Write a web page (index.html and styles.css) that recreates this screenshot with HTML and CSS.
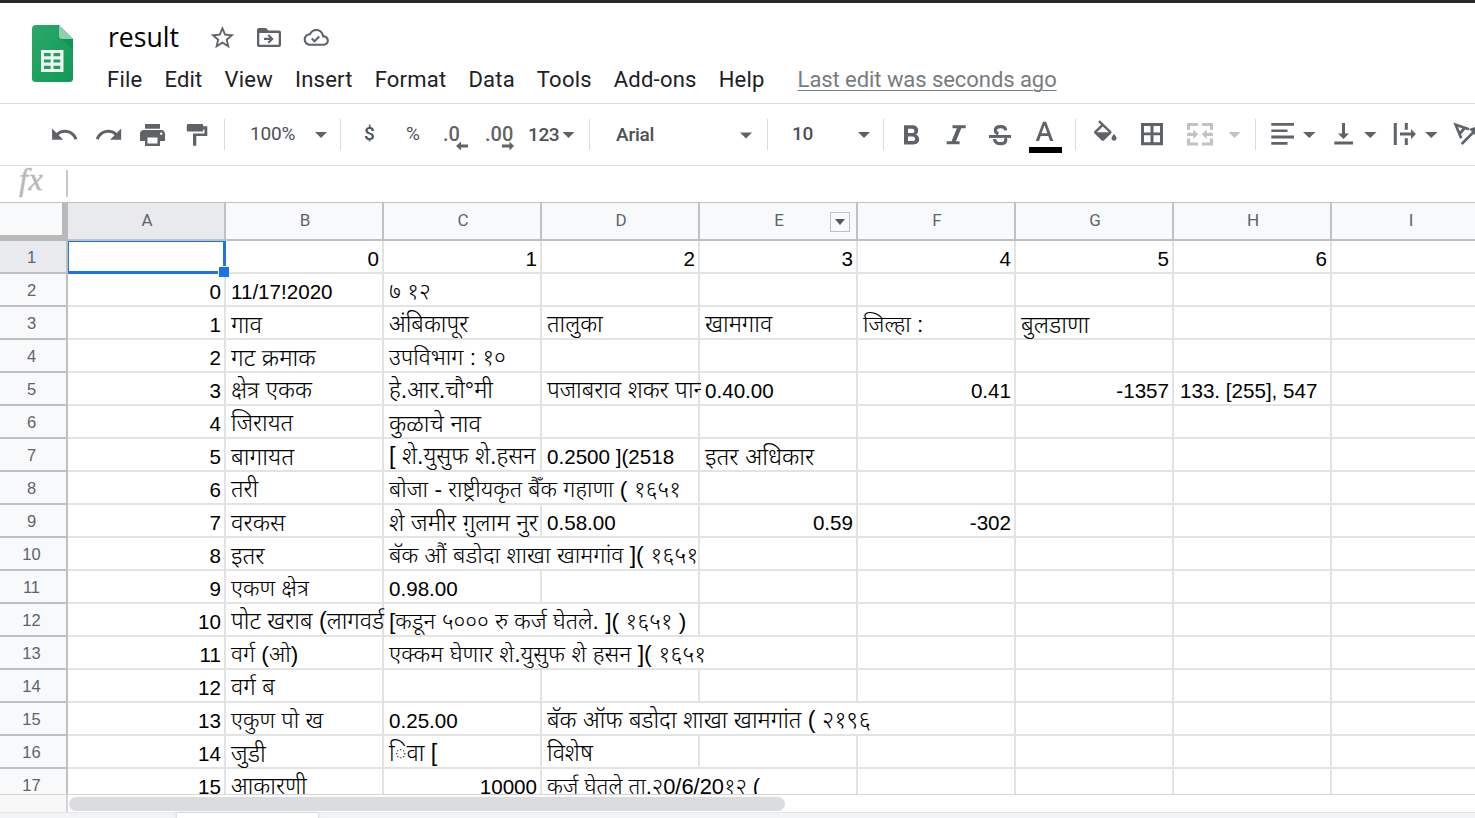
FILE: index.html
```html
<!DOCTYPE html>
<html lang="en">
<head>
<meta charset="utf-8">
<title>result</title>
<link rel="stylesheet" href="styles.css">
</head>
<body>
<div class="app">
  <header class="header">
    <svg class="logo" viewBox="32 25 41 57" width="41" height="57">
      <defs><linearGradient id="lg" x1="0" y1="0" x2="1" y2="1"><stop offset="0" stop-color="#2aa86a"/><stop offset="1" stop-color="#119a55"/></linearGradient></defs>
      <path fill="url(#lg)" d="M36 25h23l14 14v39.500a3.500 3.500 0 0 1-3.500 3.500h-34a3.500 3.500 0 0 1-3.500-3.500V29a4 4 0 0 1 4-4z"/>
      <path fill="#0d8c4c" d="M61 39h12v11z" opacity=".6"/>
      <path fill="#8ed1b1" d="M59 25l14 14H62.500a3.500 3.500 0 0 1-3.500-3.500z"/>
      <path fill="#f1f1f1" fill-rule="evenodd" d="M41 50h22.500v22H41zM44 53v3.200h6.700V53zm9.500 0v3.200h6.700V53zM44 59.400v3.200h6.700v-3.200zm9.500 0v3.200h6.700v-3.200zM44 65.800V69h6.700v-3.200zm9.500 0V69h6.700v-3.200z"/>
    </svg>
    <div class="heading">
      <div class="title-row">
        <span class="title">result</span>
        <svg class="title-icons" viewBox="205 20 130 34" width="130" height="34" fill="#5f6368">
          <path transform="translate(208.400 23.600) scale(1.170)" d="M22 9.240l-7.190-.62L12 2 9.190 8.630 2 9.240l5.460 4.730L5.820 21 12 17.270 18.180 21l-1.630-7.030L22 9.240zM12 15.400l-3.760 2.270 1-4.280-3.320-2.880 4.380-.38L12 6.100l1.710 4.040 4.380.38-3.320 2.880 1 4.280L12 15.400z"/>
          <path fill-rule="evenodd" d="M259 28h7l2.500 2.500H279a2 2 0 0 1 2 2V45a2 2 0 0 1-2 2h-20a2 2 0 0 1-2-2V30a2 2 0 0 1 2-2zm.300 5v11.700h19.400V33zM269 34.200l4.700 4.700-4.700 4.700-1.500-1.500 2.100-2.100H264v-2.200h5.600l-2.100-2.100z"/>
          <path transform="translate(303.700 24.800) scale(1.050)" d="M19.350 10.040C18.670 6.590 15.640 4 12 4 9.110 4 6.610 5.640 5.360 8.040 2.350 8.360 0 10.910 0 14c0 3.310 2.690 6 6 6h13c2.760 0 5-2.240 5-5 0-2.640-2.050-4.780-4.650-4.960zM19 18H6c-2.210 0-4-1.790-4-4 0-2.050 1.530-3.760 3.560-3.970l1.070-.11.5-.95C8.080 7.140 9.940 6 12 6c2.620 0 4.880 1.860 5.390 4.430l.3 1.500 1.530.11c1.560.1 2.780 1.410 2.780 2.960 0 1.650-1.350 3-3 3zM10.300 14.200l-1.900-1.900L7 13.700l3.300 3.300 5.200-5.200-1.400-1.400z"/>
        </svg>
      </div>
      <nav class="menu">
        <span>File</span><span>Edit</span><span>View</span><span>Insert</span><span>Format</span><span>Data</span><span>Tools</span><span>Add-ons</span><span>Help</span>
        <a class="last-edit">Last edit was seconds ago</a>
      </nav>
    </div>
  </header>

  <div class="toolbar">
    <svg viewBox="42 104 182 61" width="182" height="61">
      <path transform="translate(49.600 119.900) scale(1.235)" d="M12.500 8c-2.650 0-5.050.99-6.900 2.600L2 7v9h9l-3.620-3.620c1.390-1.160 3.160-1.880 5.120-1.880 3.540 0 6.550 2.310 7.600 5.500l2.370-.78C21.080 11.030 17.150 8 12.500 8z"/>
      <path transform="translate(94 119.900) scale(1.235)" d="M18.400 10.600C16.550 8.990 14.150 8 11.500 8c-4.650 0-8.580 3.030-9.960 7.220L3.900 16c1.050-3.190 4.050-5.500 7.600-5.500 1.950 0 3.730.72 5.120 1.880L13 16h9V7l-3.600 3.600z"/>
      <path transform="translate(137.500 120.300) scale(1.250 1.220)" d="M19 8H5c-1.660 0-3 1.340-3 3v6h4v4h12v-4h4v-6c0-1.660-1.340-3-3-3zm-3 11H8v-5h8v5zm3-7c-.55 0-1-.45-1-1s.45-1 1-1 1 .45 1 1-.45 1-1 1zm-1-9H6v4h12V3z"/>
      <path d="M188 124h14a1.200 1.200 0 0 1 1.200 1.200v1h4.100V136h-11v9.700H193v-12.300h11.500v-4h-1.300v1a1.200 1.200 0 0 1-1.200 1.200h-14a1.200 1.200 0 0 1-1.200-1.200v-5.200a1.200 1.200 0 0 1 1.200-1.200z"/>
    </svg>
    <i class="sep"></i>
    <span class="tool zoom">100%</span>
    <svg viewBox="308 104 32 61" width="32" height="61"><path d="M315 132h12l-6 6z"/></svg>
    <i class="sep"></i>
    <span class="tool dollar">$</span>
    <span class="tool percent">%</span>
    <span class="tool dec dec-less">.0<svg viewBox="0 0 12 10" width="12" height="10"><path d="M0 5l5-4.500v3h7v3H5v3z"/></svg></span>
    <span class="tool dec dec-more">.00<svg viewBox="0 0 12 10" width="12" height="10"><path d="M12 5L7.500.500v3H0v3h7.500v3z"/></svg></span>
    <span class="tool fmt">123</span>
    <svg viewBox="560 104 29 61" width="29" height="61"><path d="M562.500 132h12l-6 6z"/></svg>
    <i class="sep"></i>
    <span class="tool font">Arial</span>
    <svg viewBox="735 104 32 61" width="32" height="61"><path d="M740 132.500h12l-6 6z"/></svg>
    <i class="sep"></i>
    <span class="tool size">10</span>
    <svg viewBox="848 104 35 61" width="35" height="61"><path d="M858 132h12l-6 6z"/></svg>
    <i class="sep"></i>
    <svg viewBox="884 104 191 61" width="191" height="61">
      <path fill-rule="evenodd" d="M904 125.300h8.600c3.400 0 5.600 2.200 5.600 5.200 0 1.900-.9 3.300-2.300 4.100 2 .8 3.300 2.500 3.300 4.700 0 3.300-2.500 5.200-5.800 5.200H904zm4 3.400v4.400h4.300c2.800 0 2.800-4.400 0-4.400zm0 7.700v4.700h4.800c3 0 3-4.700 0-4.700z"/>
      <path d="M952.500 125.300h13.200v2.900h-4.400l-5.400 13.100h3.700v2.900H946.700v-2.900h4.800l5.400-13.100H952.500z"/>
      <path d="M989 135h22v2.900h-22z"/>
      <path fill="none" stroke="#5f6368" stroke-width="3.200" d="M1005.700 130.300c-.2-2.500-2.400-3.700-5-3.700-3 0-5.300 1.300-5.300 3.800 0 2 1.500 2.800 3 3.300M994.500 139c.2 2.800 2.700 4.600 6 4.600 3.100 0 5.300-1.300 5.300-3.700 0-.8-.3-1.500-.7-2"/>
      <path fill-rule="evenodd" d="M1043 121.700h3.100l7.200 19.300h-3.300l-1.700-5h-7.600l-1.700 5h-3.300zm-1.400 11.600h5.700l-2.800-8z"/>
      <path fill="#000" d="M1029 147h33v6h-33z"/>
    </svg>
    <i class="sep"></i>
    <svg viewBox="1076 104 179 61" width="179" height="61">
      <path transform="translate(1090.300 120.300) scale(1.250 1.200)" d="M16.560 8.940L7.620 0 6.210 1.410l2.380 2.380-5.150 5.150c-.59.59-.59 1.540 0 2.120l5.500 5.500c.29.29.68.44 1.060.44s.77-.15 1.060-.44l5.500-5.500c.59-.58.59-1.530 0-2.120zM5.210 10L10 5.210 14.790 10H5.210zM19 11.500s-2 2.170-2 3.500c0 1.100.9 2 2 2s2-.9 2-2c0-1.330-2-3.500-2-3.500z"/>
      <path fill-rule="evenodd" d="M1141 123h22v22.300h-22zm3 3v6.500h6.500V126zm9.500 0v6.500h6.500V126zm-9.500 9.300v7h6.500v-7zm9.500 0v7h6.500v-7z"/>
      <g fill="#c1c3c5"><path d="M1187 123h11v3h-8v4h-3zM1202 123h11v7h-3v-4h-8zM1187 138.500h3v4h8v3h-11zM1210 138.500h3v7h-11v-3h8zM1187 132.700h6.300v-3.200l4.900 4.800-4.900 4.800v-3.200H1187zM1213 132.700h-6.300v-3.200l-4.900 4.800 4.900 4.800v-3.200h6.300zM1228.500 132h12l-6 6z"/></g>
    </svg>
    <i class="sep"></i>
    <svg viewBox="1256 104 219 61" width="219" height="61">
      <path d="M1271.300 123h22.700v2.800h-22.700zM1271.300 129.400h16.200v2.700h-16.200zM1271.300 135.600h22.700v2.800h-22.700zM1271.300 142h16.200v2.700h-16.200zM1303 132h12.500l-6.200 6z"/>
      <path d="M1342 123h3v10.500h4l-5.500 5.500-5.500-5.500h4zM1334.300 141.500h18.700v3h-18.700zM1364 132h12.500l-6.200 6z"/>
      <path d="M1393.800 123h3v22h-3zM1404.800 123h3v6.800h-3zM1404.800 138.300h3v6.700h-3zM1400 132.500h11v-3.600l5 5.100-5 5.100v-3.600h-11zM1425 132h12.500l-6.200 6z"/>
      <path fill="none" stroke="#5f6368" stroke-width="2.700" d="M1461.200 138.200L1455.700 124.700l13.300 4.600M1459 134.500l6-7M1461.700 144l14-14"/>
      <path d="M1475 127v8l-6-6z"/>
    </svg>
  </div>

  <div class="formula"><span class="fx">fx</span><i class="fx-sep"></i></div>

  <main class="sheet">
    <div class="cols">
      <div class="corner"></div>
      <div class="col on">A</div><div class="col">B</div><div class="col">C</div><div class="col">D</div>
      <div class="col has-menu">E<span class="col-menu"><svg viewBox="0 0 10 6" width="10" height="6"><path d="M0 0h10L5 6z"/></svg></span></div>
      <div class="col">F</div><div class="col">G</div><div class="col">H</div><div class="col">I</div>
    </div>
    <div class="row"><b class="on">1</b><p class="selected"><i class="handle"></i></p><p class="n">0</p><p class="n">1</p><p class="n">2</p><p class="n">3</p><p class="n">4</p><p class="n">5</p><p class="n">6</p><p></p></div>
    <div class="row"><b>2</b><p class="n">0</p><p>11/17!2020</p><p class="d snug">७ १२</p><p></p><p></p><p></p><p></p><p></p><p></p></div>
    <div class="row"><b>3</b><p class="n">1</p><p class="d wide">गाव</p><p class="d">अंबिकापूर</p><p class="d">तालुका</p><p class="d">खामगाव</p><p class="d snug">जिल्हा :</p><p class="d wide">बुलडाणा</p><p></p><p></p></div>
    <div class="row"><b>4</b><p class="n">2</p><p class="d wide">गट क्रमाक</p><p class="d snug">उपविभाग : १०</p><p></p><p></p><p></p><p></p><p></p><p></p></div>
    <div class="row"><b>5</b><p class="n">3</p><p class="d">क्षेत्र एकक</p><p class="d">हे.आर.चौ°मी</p><p class="d clip">पजाबराव शकर पान</p><p>0.40.00</p><p class="n">0.41</p><p class="n">-1357</p><p class="h">133. [255], 547</p><p></p></div>
    <div class="row"><b>6</b><p class="n">4</p><p class="d">जिरायत</p><p class="d wide">कुळाचे नाव</p><p></p><p></p><p></p><p></p><p></p><p></p></div>
    <div class="row"><b>7</b><p class="n">5</p><p class="d wide">बागायत</p><p class="d">[ शे.युसुफ शे.हसन</p><p>0.2500 ](2518</p><p class="d wide">इतर अधिकार</p><p></p><p></p><p></p><p></p></div>
    <div class="row"><b>8</b><p class="n">6</p><p class="d">तरी</p><p class="d snug span2">बोजा - राष्ट्रीयकृत बैँक गहाणा ( १६५१</p><p></p><p></p><p></p><p></p><p></p></div>
    <div class="row"><b>9</b><p class="n">7</p><p class="d wide">वरकस</p><p class="d wide">शे जमीर ग़ुलाम नुर</p><p>0.58.00</p><p class="n">0.59</p><p class="n">-302</p><p></p><p></p><p></p></div>
    <div class="row"><b>10</b><p class="n">8</p><p class="d wide">इतर</p><p class="d long span2">बॅक औं बडोदा शाखा खामगांव ]( १६५१</p><p></p><p></p><p></p><p></p><p></p></div>
    <div class="row"><b>11</b><p class="n">9</p><p class="d snug">एकण क्षेत्र</p><p>0.98.00</p><p></p><p></p><p></p><p></p><p></p><p></p></div>
    <div class="row"><b>12</b><p class="n">10</p><p class="d clip">पोट खराब (लागवर्ड</p><p class="d snug span2">[कडून ५००० रु कर्ज घेतले. ]( १६५१ )</p><p></p><p></p><p></p><p></p><p></p></div>
    <div class="row"><b>13</b><p class="n">11</p><p class="d snug">वर्ग (ओ)</p><p class="d long span3">एक्कम घेणार शे.युसुफ शे हसन ]( १६५१</p><p></p><p></p><p></p><p></p></div>
    <div class="row"><b>14</b><p class="n">12</p><p class="d">वर्ग ब</p><p></p><p></p><p></p><p></p><p></p><p></p><p></p></div>
    <div class="row"><b>15</b><p class="n">13</p><p class="d snug">एकुण पो ख</p><p>0.25.00</p><p class="d span3">बॅक ऑफ बडोदा शाखा खामगांत ( २१९६</p><p></p><p></p><p></p></div>
    <div class="row"><b>16</b><p class="n">14</p><p class="d wide">जुडी</p><p class="d">िवा [</p><p class="d">विशेष</p><p></p><p></p><p></p><p></p><p></p></div>
    <div class="row"><b>17</b><p class="n">15</p><p class="d">आकारणी</p><p class="n">10000</p><p class="d mixed span2">कर्ज घेतले ता.२0/6/20१२ (</p><p></p><p></p><p></p><p></p></div>
  </main>

  <div class="scroll"><div class="scroll-corner"></div><div class="thumb"></div></div>
  <footer class="tabs"><div class="tab"></div></footer>
</div>
</body>
</html>
```
FILE: styles.css
```css
* { box-sizing: border-box; }
body { margin: 0; background: #fff; font-family: Roboto, "Liberation Sans", sans-serif; }
p, i, b { margin: 0; font-style: normal; font-weight: 400; }
svg { display: block; flex: none; }
.app { width: 1475px; height: 818px; overflow: hidden; display: flex; flex-direction: column; border-top: 3px solid #28272b; }
.app > * { flex: none; }

.header { height: 101px; display: flex; border-bottom: 1px solid #dadce0; padding-left: 32px; }
.logo { margin-top: 22px; }
.heading { margin-left: 34px; padding-top: 17px; }
.title-row { display: flex; height: 34px; align-items: center; }
.title { width: 98px; padding-left: 1px; font: 26.6px/34px "Open Sans", sans-serif; height: 34px; color: #000; }
.menu { display: flex; gap: 22px; margin-top: 10px; font-size: 22px; line-height: 32px; letter-spacing: .22px; color: #202124; white-space: nowrap; }
.last-edit { margin-left: 11px; color: #777b80; text-decoration: underline; text-decoration-thickness: 1px; text-underline-offset: 3px; letter-spacing: -.06px; }

.toolbar { height: 62px; display: flex; border-bottom: 1px solid #dadce0; padding-left: 42px; fill: #5f6368; color: #4d5156; font-size: 19px; line-height: 60px; overflow: hidden; }
.toolbar > * { flex: none; }
.sep { width: 1px; height: 31px; margin-top: 15px; background: #dadce0; }
.tool { white-space: nowrap; }
.zoom { width: 83px; padding-left: 25px; letter-spacing: -.2px; }
.dollar { width: 51px; padding-left: 23px; font-weight: 500; }
.percent { width: 51px; padding-left: 14px; }
.dec { display: flex; font-weight: 500; font-size: 20px; color: #5f6368; }
.dec-less { width: 42px; }
.dec-more { width: 43px; }
.dec svg { margin: 37px 0 0 -4px; }
.dec-more svg { margin-left: -11px; }
.fmt { width: 32px; font-weight: 500; letter-spacing: -.4px; line-height: 61px; }
.font { width: 145px; padding-left: 26px; font-weight: 500; line-height: 61px; letter-spacing: -.2px; }
.size { width: 80px; padding-left: 24px; font-weight: 500; line-height: 59px; letter-spacing: -.3px; }

.formula { height: 37px; display: flex; border-bottom: 1px solid #c0c0c0; }
.fx { width: 66px; padding-left: 19px; font: italic 32px/27px "Liberation Serif", serif; letter-spacing: .5px; color: #b8b8b8; -webkit-text-stroke: .4px #b8b8b8; }
.fx-sep { width: 2px; height: 27px; margin-top: 4px; background: #c8c8c8; }

.sheet { height: 592px; overflow: hidden; border-bottom: 1px solid #d5d5d5; }
.cols, .row { display: flex; width: 1490px; }
.cols { height: 38px; }
.corner { width: 68px; background: #f8f9fa; border: solid #b9b9b9; border-width: 0 6px 6px 0; }
.cols > *, .row > * { flex: none; }
.col { width: 158px; padding-left: 2px; border: solid #c0c0c0; border-width: 0 2px 2px 0; background: #f8f9fa; text-align: center; font-size: 17px; line-height: 35px; color: #5f6368; }
.col.on, .row b.on { background: #e8eaed; }
.has-menu { position: relative; }
.col-menu { position: absolute; right: 6px; top: 9px; width: 20px; height: 20px; border: 1px solid #c0c0c0; display: flex; align-items: center; justify-content: center; fill: #555; }
.row { height: 33px; }
.row b { width: 68px; padding-right: 3px; border: solid #c0c0c0; border-width: 0 2px 2px 0; background: #f8f9fa; text-align: center; font: 16.500px/33px "Liberation Sans", sans-serif; color: #5f6368; height: 33px; }
.row p { width: 158px; border: solid #e2e3e3; border-width: 0 2px 2px 0; padding-left: 5px; font: 20.600px/36px "Liberation Sans", sans-serif; color: #000; white-space: pre; height: 33px; }
.row p.d { font: 300 23.300px/35px "Liberation Sans", "Noto Sans Devanagari", "Noto Sans", sans-serif; }
.row p.wide { font-size: 23.800px; }
.row p.long { font-size: 23.050px; }
.row p.snug { font-size: 22.700px; }
.row p.mixed { font-size: 21.900px; }
.row p.h { padding-left: 6px; }
.row p.n { text-align: right; padding-right: 3px; }
.row p.span2 { width: 316px; }
.row p.span3 { width: 474px; }
.row p.clip { overflow: clip; overflow-clip-margin: 3px; }
.row p.selected { position: relative; border: solid #1a73e8; border-width: 1px 3px 3px 1px; }
.handle { position: absolute; right: -6px; bottom: -6px; width: 11px; height: 11px; background: #1a73e8; border: solid #fff; border-width: 1px 0 0 1px; }

.scroll { height: 17px; display: flex; align-items: center; background: #fff; }
.scroll-corner { width: 68px; height: 17px; background: #f8f8f8; border-right: 2px solid #d5d5d5; }
.thumb { width: 716px; height: 14px; margin-left: 1px; border-radius: 7px; background: #dadce0; }
.tabs { height: 6px; background: #f1f3f4; border-top: 1px solid #e3e5e8; }
.tab { width: 141px; height: 6px; margin: 0 0 0 177px; background: #fff; box-shadow: 0 0 3px #bbb; }
```
